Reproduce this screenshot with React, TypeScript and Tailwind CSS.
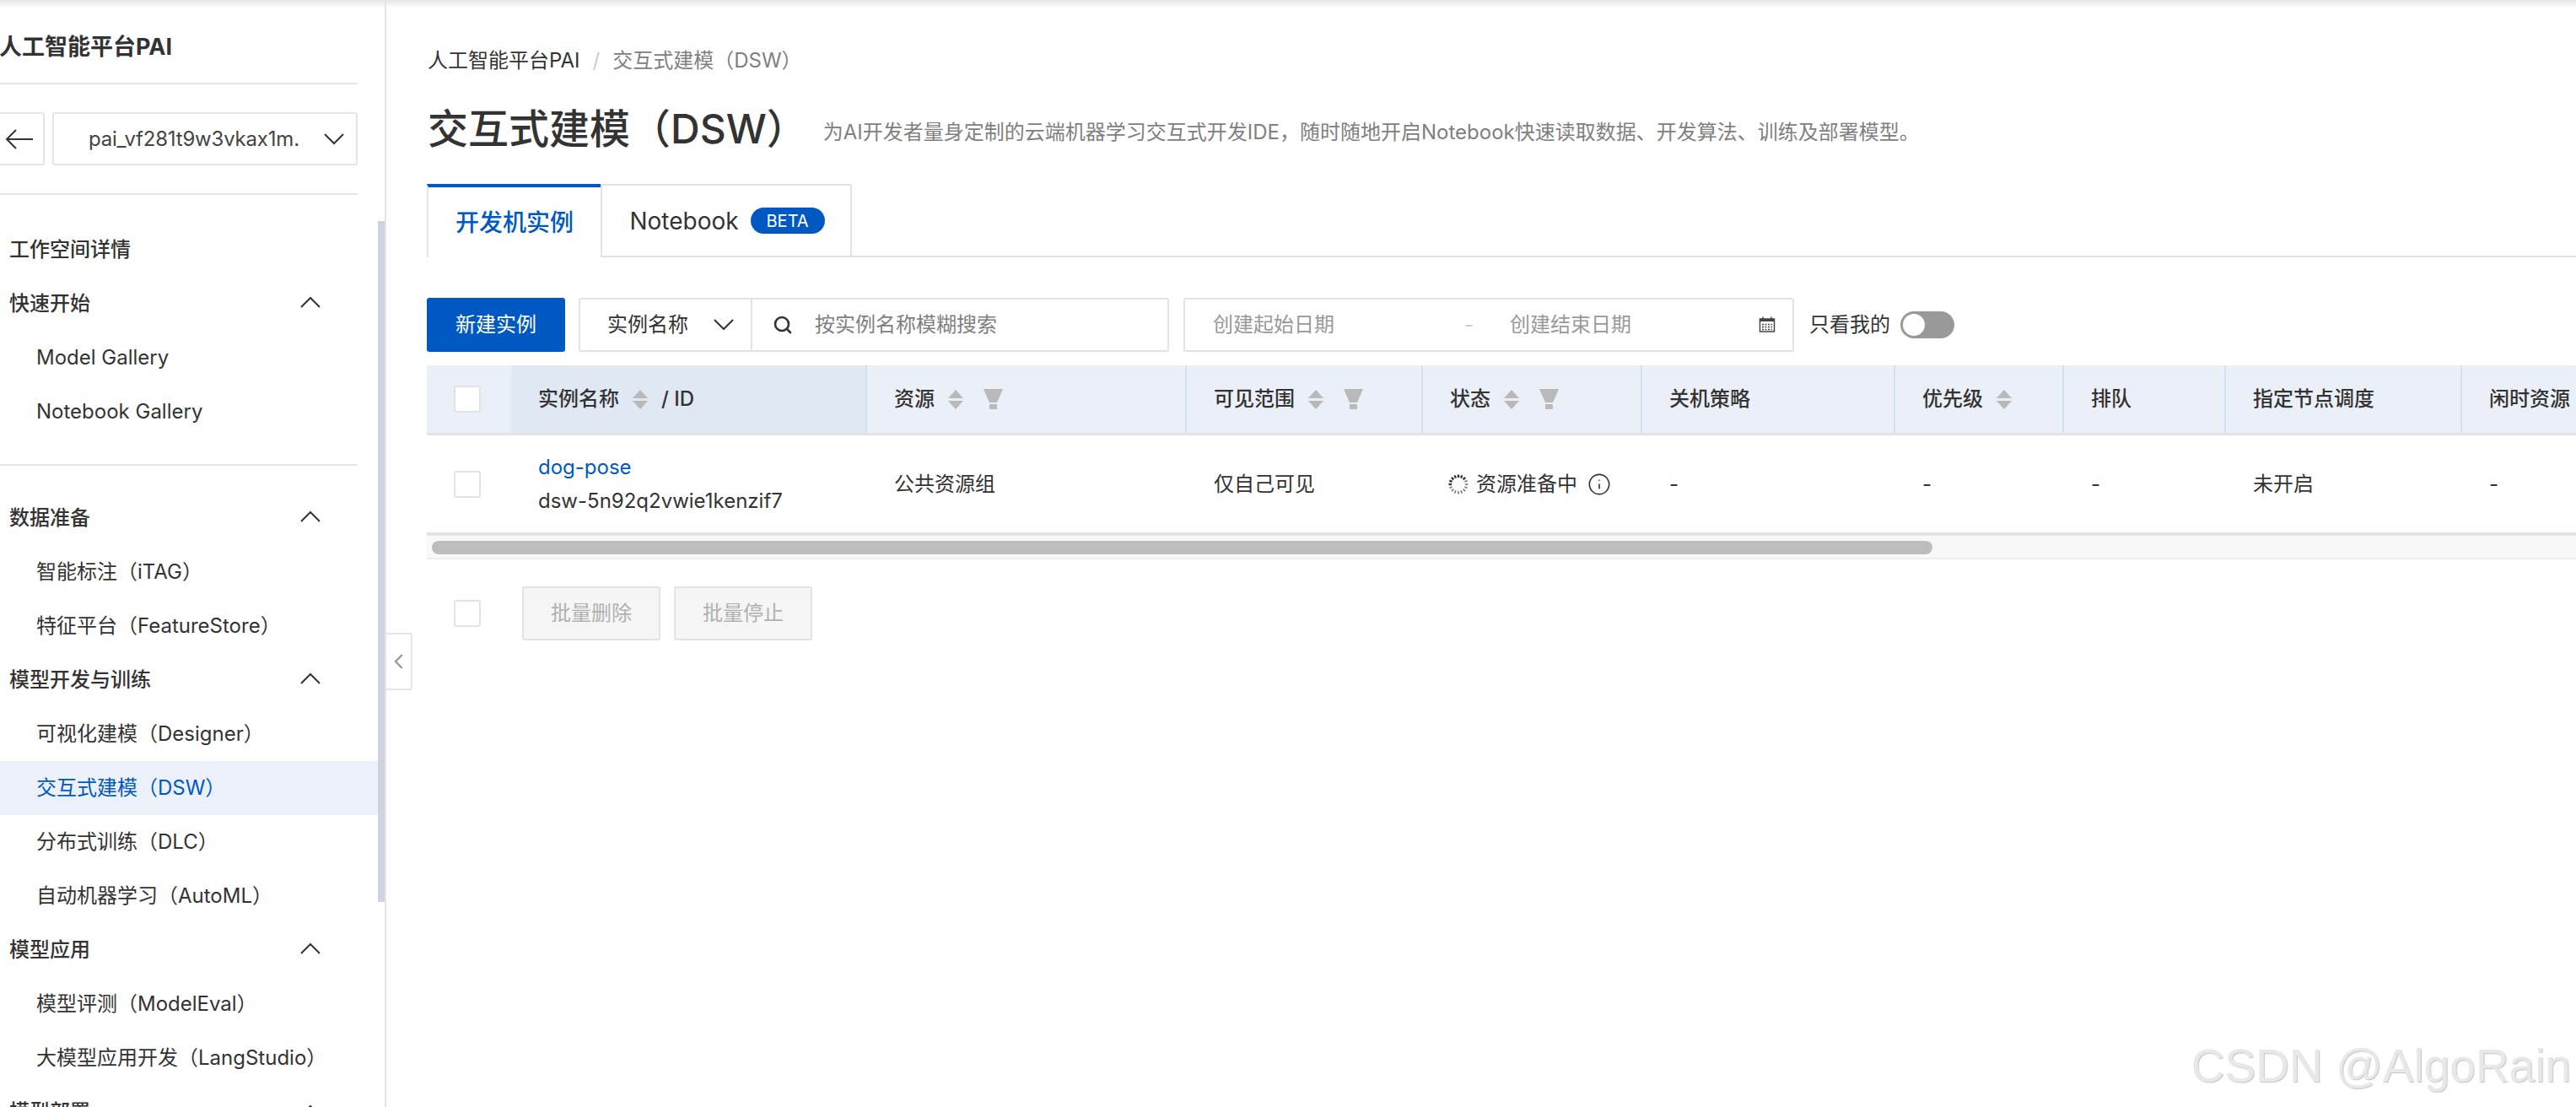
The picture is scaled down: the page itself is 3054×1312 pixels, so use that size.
import React from 'react';
import { ChevronLeft, Info, Search } from 'lucide-react';

const Chevron: React.FC<{ up?: boolean; className?: string }> = ({ up, className }) => (
  <svg width="24" height="14" viewBox="0 0 24 14" fill="none" className={className}>
    <polyline
      points={up ? '1,13 12,2 23,13' : '1,1 12,12 23,1'}
      stroke="#333"
      strokeWidth="2"
    />
  </svg>
);

const BackArrow: React.FC = () => (
  <svg width="34" height="26" viewBox="0 0 34 26" fill="none">
    <path d="M33 13H2M13 2L2 13l11 11" stroke="#333" strokeWidth="2" />
  </svg>
);

const SortIcon: React.FC = () => (
  <svg width="18" height="23" viewBox="0 0 18 23" className="shrink-0">
    <polygon points="9,0 18,10 0,10" fill="#b9b9b9" />
    <polygon points="0,13 18,13 9,23" fill="#b9b9b9" />
  </svg>
);

const FilterIcon: React.FC = () => (
  <svg width="23" height="24" viewBox="0 0 23 24" className="shrink-0">
    <polygon points="0,0 23,0 16,16 7,16" fill="#b9b9b9" />
    <rect x="7" y="18" width="9" height="6" rx="1" fill="#b9b9b9" />
  </svg>
);

const Spinner: React.FC = () => (
  <svg width="24" height="24" viewBox="0 0 24 24" className="shrink-0">
    {Array.from({ length: 16 }).map((_, i) => {
      const a = (i / 16) * Math.PI * 2;
      const dark = i < 3 || i > 11;
      return (
        <line
          key={i}
          x1={12 + Math.sin(a) * 8}
          y1={12 - Math.cos(a) * 8}
          x2={12 + Math.sin(a) * 11.5}
          y2={12 - Math.cos(a) * 11.5}
          stroke={dark ? '#333' : '#777'}
          strokeWidth={dark ? 2.4 : 1.6}
        />
      );
    })}
  </svg>
);

const CalendarIcon: React.FC = () => (
  <svg width="20" height="20" viewBox="0 0 20 20" fill="none" className="shrink-0">
    <rect x="1.5" y="3" width="17" height="15" stroke="#444" strokeWidth="1.5" />
    <rect x="1.5" y="3" width="17" height="3" fill="#444" />
    <path d="M5 0.5v3M15 0.5v3" stroke="#444" strokeWidth="1.5" />
    <path d="M4 9.5h12M4 12.5h12M4 15.5h12" stroke="#444" strokeWidth="1.5" strokeDasharray="2 1.5" />
  </svg>
);

const Checkbox: React.FC = () => (
  <span className="block w-8 h-8 bg-white border-2 border-[#e3e3e3] rounded-[3px]" />
);

const SideGroup: React.FC<{ label: string; chevron?: boolean }> = ({ label, chevron = true }) => (
  <div className="h-16 pl-[11px] pr-[68px] flex items-center justify-between font-medium text-[#333]">
    <span>{label}</span>
    {chevron && <Chevron up className="-mt-[4px]" />}
  </div>
);

const SideItem: React.FC<{ label: string; active?: boolean }> = ({ label, active }) => (
  <div
    className={`h-16 pl-[43px] flex items-center ${active ? 'bg-[#ecf0f8] text-[#0059c3]' : 'text-[#333]'}`}
  >
    {label}
  </div>
);

const Sidebar: React.FC = () => (
  <aside className="relative w-[458px] shrink-0 h-full border-r-2 border-[#e5e5e5] overflow-visible">
    <div className="w-[424px] h-[100px] pt-[14px] flex items-center border-b-2 border-[#e5e5e5]">
      <h2 className="text-[27px] font-bold text-[#333] -ml-[1px] whitespace-nowrap">人工智能平台PAI</h2>
    </div>
    <div className="w-[424px] h-[131px] flex items-center gap-[9px] border-b-2 border-[#e5e5e5]">
      <button className="w-[66px] h-[63px] -ml-[13px] pl-[5px] shrink-0 bg-white border-2 border-[#e5e5e5] rounded-[3px] flex items-center justify-center">
        <BackArrow />
      </button>
      <div className="flex-1 h-[63px] pl-[41px] pr-[14px] bg-white border-2 border-[#e5e5e5] rounded-[3px] flex items-center justify-between">
        <span className="w-[250px] overflow-hidden whitespace-nowrap tracking-[-0.2px] text-[#444]">pai_vf281t9w3vkax1m.</span>
        <Chevron />
      </div>
    </div>

    <nav className="w-[448px] pt-[33px] text-[24px]">
      <SideGroup label="工作空间详情" chevron={false} />
      <SideGroup label="快速开始" />
      <SideItem label="Model Gallery" />
      <SideItem label="Notebook Gallery" />
      <div className="w-[424px] mt-[30px] mb-[30px] border-b-2 border-[#e5e5e5]" />
      <SideGroup label="数据准备" />
      <SideItem label="智能标注（iTAG）" />
      <SideItem label="特征平台（FeatureStore）" />
      <SideGroup label="模型开发与训练" />
      <SideItem label="可视化建模（Designer）" />
      <SideItem label="交互式建模（DSW）" active />
      <SideItem label="分布式训练（DLC）" />
      <SideItem label="自动机器学习（AutoML）" />
      <SideGroup label="模型应用" />
      <SideItem label="模型评测（ModelEval）" />
      <SideItem label="大模型应用开发（LangStudio）" />
      <SideGroup label="模型部署" />
    </nav>

    {/* sidebar scrollbar thumb */}
    <div className="absolute left-[448px] top-[262px] w-2 h-[807px] bg-[#cfd3e0]" />
    {/* collapse handle */}
    <button className="absolute left-[456px] top-[750px] w-[33px] h-[68px] bg-white border-2 border-[#e5e5e5] rounded-r-[3px] flex items-center justify-center">
      <ChevronLeft size={32} strokeWidth={2} color="#999" />
    </button>
  </aside>
);

type Col = {
  title: string;
  width: string;
  sort?: boolean;
  filter?: boolean;
  cell: React.ReactNode;
};

const columns: Col[] = [
  { title: '资源', width: 'w-[379px]', sort: true, filter: true, cell: '公共资源组' },
  { title: '可见范围', width: 'w-[280px]', sort: true, filter: true, cell: '仅自己可见' },
  {
    title: '状态',
    width: 'w-[260px]',
    sort: true,
    filter: true,
    cell: (
      <span className="flex items-center gap-[9px] -ml-[2px]">
        <Spinner />
        <span>资源准备中</span>
        <Info size={28} strokeWidth={1.4} color="#333" className="ml-[3px]" />
      </span>
    )
  },
  { title: '关机策略', width: 'w-[300px]', cell: '-' },
  { title: '优先级', width: 'w-[200px]', sort: true, cell: '-' },
  { title: '排队', width: 'w-[192px]', cell: '-' },
  { title: '指定节点调度', width: 'w-[280px]', cell: '未开启' },
  { title: '闲时资源', width: 'w-[300px]', cell: '-' }
];

const InstanceTable: React.FC = () => (
  <div className="w-[2548px]">
    <div className="flex h-[83px] bg-[#ebeff7] border-b-[3px] border-[#e3e3e3] rounded-t-[3px] font-medium">
      <div className="w-[100px] shrink-0 pl-[32px] flex items-center">
        <Checkbox />
      </div>
      <div className="w-[420px] shrink-0 pl-[32px] bg-[#dfe8f3] flex items-center gap-[16px]">
        <span>实例名称</span>
        <SortIcon />
        <span>/ ID</span>
      </div>
      {columns.map(col => (
        <div
          key={col.title}
          className={`${col.width} shrink-0 pl-[32px] border-l-2 border-[#d3e0f0] flex items-center gap-[16px] whitespace-nowrap`}
        >
          <span>{col.title}</span>
          {col.sort && <SortIcon />}
          {col.filter && <span className="ml-[8px]"><FilterIcon /></span>}
        </div>
      ))}
    </div>
    <div className="flex h-[119px] border-b-4 border-[#e3e3e3]">
      <div className="w-[100px] shrink-0 pl-[32px] flex items-center">
        <Checkbox />
      </div>
      <div className="w-[420px] shrink-0 pl-[32px] flex flex-col justify-center gap-[12px] leading-[28px]">
        <a className="text-[#0059c3]">dog-pose</a>
        <span>dsw-5n92q2vwie1kenzif7</span>
      </div>
      {columns.map(col => (
        <div key={col.title} className={`${col.width} shrink-0 pl-[34px] flex items-center`}>
          {col.cell}
        </div>
      ))}
    </div>
    <div className="h-[28px] pl-[6px] pt-[6px] bg-[#f8f8f8] border-b-2 border-[#eeeeee]">
      <div className="w-[1779px] h-4 rounded-full bg-[#bdbdbd]" />
    </div>
  </div>
);

const App: React.FC = () => {
  return (
    <div className="relative w-[3054px] h-[1312px] overflow-hidden bg-white flex text-[24px] text-[#333] font-['Inter','Noto_Sans_CJK_SC',sans-serif]">
      <Sidebar />

      <main className="flex-1 min-w-0 pl-[48px]">
        <div className="h-[100px] pt-[44px] pl-[1px] flex items-center whitespace-nowrap">
          <span>人工智能平台PAI</span>
          <span className="mx-[15px] text-[#ccc]">/</span>
          <span className="text-[#808080]">交互式建模（DSW）</span>
        </div>

        <div className="h-[118px] pb-[12px] pl-[1px] flex items-center whitespace-nowrap">
          <h1 className="text-[48px] font-medium text-[#333]">交互式建模（DSW）</h1>
          <p className="ml-[19px] mt-[8px] text-[#808080]">
            为AI开发者量身定制的云端机器学习交互式开发IDE，随时随地开启Notebook快速读取数据、开发算法、训练及部署模型。
          </p>
        </div>

        <div className="h-[87px] flex border-b-2 border-[#e3e3e3] text-[28px]">
          <div className="w-[206px] h-[87px] border-t-4 border-[#0059c3] border-l-2 border-l-[#e3e3e3] bg-white flex items-center justify-center font-medium text-[#0059c3]">
            开发机实例
          </div>
          <div className="w-[298px] h-full pl-[2px] border-t-2 border-r-2 border-l-2 border-[#e3e3e3] flex items-center justify-center gap-[14px]">
            <span>Notebook</span>
            <span className="w-[88px] h-[31px] rounded-full bg-[#0059c3] text-white text-[20px] flex items-center justify-center">
              BETA
            </span>
          </div>
        </div>

        <div className="mt-[48px] flex items-center h-16">
          <button className="w-[164px] h-16 bg-[#0059c3] text-white rounded-[3px]">新建实例</button>
          <div className="ml-[16px] w-[700px] h-16 flex bg-white border-2 border-[#e3e3e3] rounded-[3px]">
            <div className="w-[204px] pl-[32px] pr-[20px] flex items-center justify-between border-r-2 border-[#e3e3e3]">
              <span>实例名称</span>
              <Chevron />
            </div>
            <div className="flex-1 pl-[24px] flex items-center gap-[26px] text-[#808080]">
              <Search size={24} strokeWidth={2.6} color="#333" />
              <span>按实例名称模糊搜索</span>
            </div>
          </div>
          <div className="ml-[17px] w-[724px] h-16 pl-[33px] pr-[20px] flex items-center bg-white border-2 border-[#e3e3e3] rounded-[3px] text-[#999]">
            <span className="w-[298px]">创建起始日期</span>
            <span className="text-[#ccc] w-[54px]">-</span>
            <span className="flex-1">创建结束日期</span>
            <CalendarIcon />
          </div>
          <span className="ml-[18px] whitespace-nowrap">只看我的</span>
          <span className="ml-[12px] w-[64px] h-8 rounded-full bg-[#999] p-[3px] flex items-center">
            <span className="w-[26px] h-[26px] rounded-full bg-white" />
          </span>
        </div>

        <div className="mt-[16px]">
          <InstanceTable />
        </div>

        <div className="mt-[32px] pl-[32px] h-16 flex items-center">
          <Checkbox />
          <button className="ml-[49px] w-[164px] h-16 bg-[#f5f5f5] border-2 border-[#e3e3e3] rounded-[3px] text-[#b0b0b0]">
            批量删除
          </button>
          <button className="ml-[16px] w-[164px] h-16 bg-[#f5f5f5] border-2 border-[#e3e3e3] rounded-[3px] text-[#b0b0b0]">
            批量停止
          </button>
        </div>
      </main>

      {/* top shadow strip */}
      <div className="absolute inset-x-0 top-0 h-[9px] bg-gradient-to-b from-[#e4e6e8] to-transparent" />
      {/* CSDN watermark */}
      <div className="absolute right-[6px] top-[1230px] text-[55px] leading-[66px] text-[#e8e8e8] whitespace-nowrap font-['Liberation_Sans',sans-serif] [text-shadow:1px_1px_1px_#c4c4c4]">
        CSDN @AlgoRain
      </div>
    </div>
  );
};

export default App;
